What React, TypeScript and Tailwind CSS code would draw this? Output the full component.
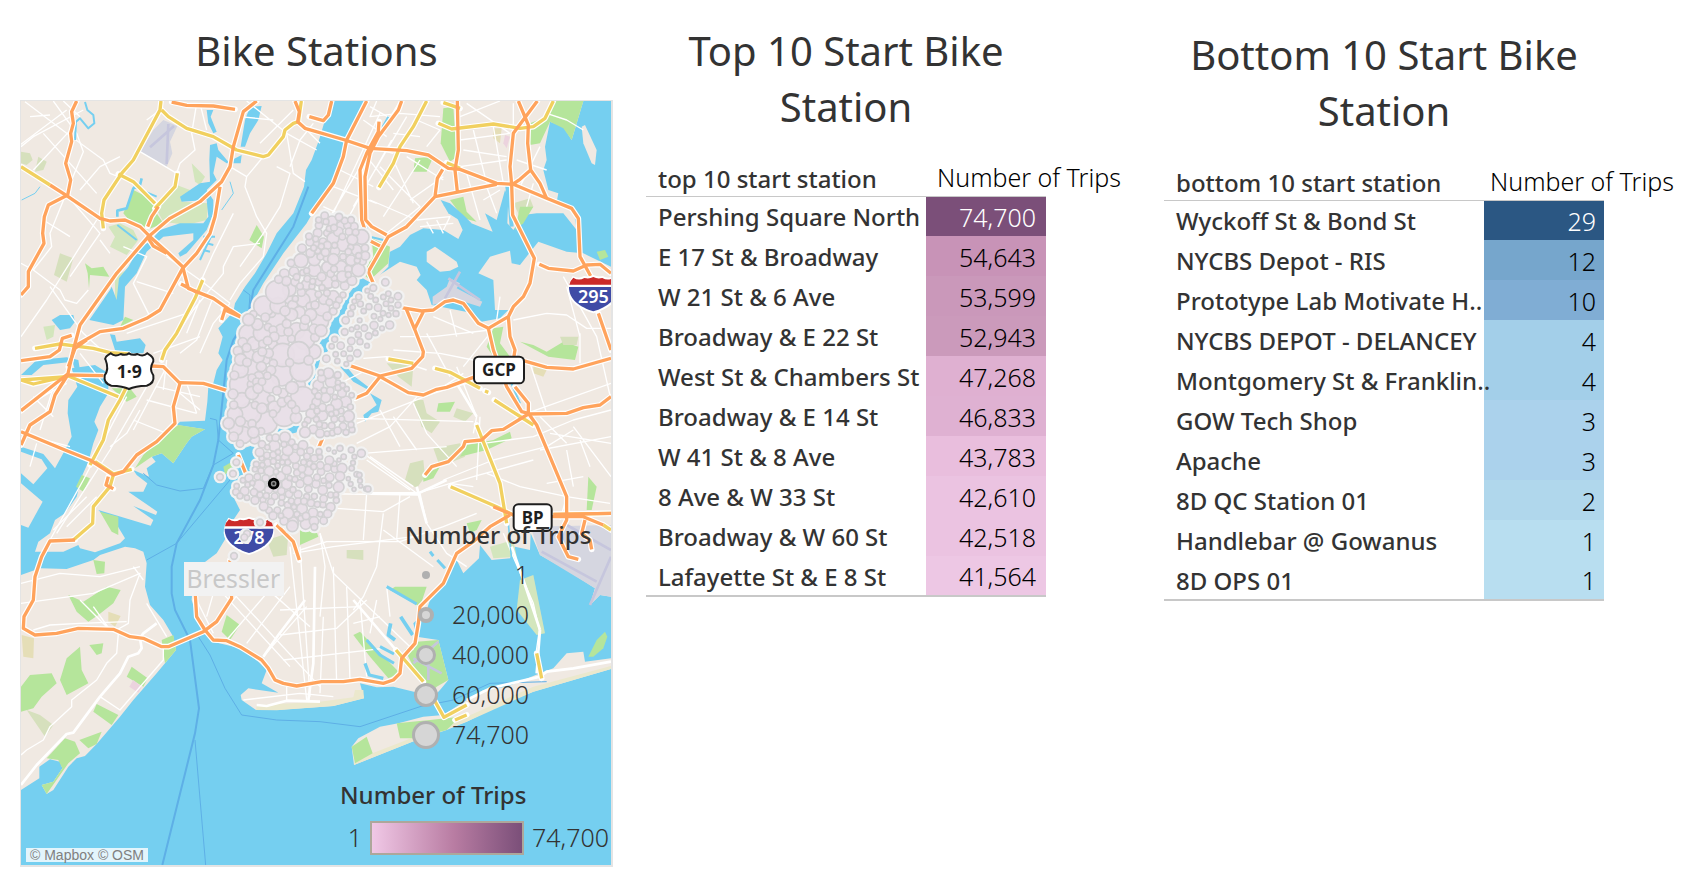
import React from "react";

type Row = { name: string; value: string; cell: string };

const topRows: Row[] = [
  { name: "Pershing Square North", value: "74,700", cell: "bg-[#7b4f79] text-white" },
  { name: "E 17 St & Broadway", value: "54,643", cell: "bg-[#c893b7] text-black" },
  { name: "W 21 St & 6 Ave", value: "53,599", cell: "bg-[#ca98ba] text-black" },
  { name: "Broadway & E 22 St", value: "52,943", cell: "bg-[#cb9abb] text-black" },
  { name: "West St & Chambers St", value: "47,268", cell: "bg-[#dfb0d1] text-black" },
  { name: "Broadway & E 14 St", value: "46,833", cell: "bg-[#dfb1d2] text-black" },
  { name: "W 41 St & 8 Ave", value: "43,783", cell: "bg-[#e9bedd] text-black" },
  { name: "8 Ave & W 33 St", value: "42,610", cell: "bg-[#ebc3e1] text-black" },
  { name: "Broadway & W 60 St", value: "42,518", cell: "bg-[#ebc3e1] text-black" },
  { name: "Lafayette St & E 8 St", value: "41,564", cell: "bg-[#edc7e4] text-black" },
];

const bottomRows: Row[] = [
  { name: "Wyckoff St & Bond St", value: "29", cell: "bg-[#2b5783] text-white" },
  { name: "NYCBS Depot - RIS", value: "12", cell: "bg-[#76a6cc] text-black" },
  { name: "Prototype Lab Motivate H..", value: "10", cell: "bg-[#80add4] text-black" },
  { name: "NYCBS DEPOT - DELANCEY", value: "4", cell: "bg-[#a3cfe9] text-black" },
  { name: "Montgomery St & Franklin..", value: "4", cell: "bg-[#a3cfe9] text-black" },
  { name: "GOW Tech Shop", value: "3", cell: "bg-[#abd2ec] text-black" },
  { name: "Apache", value: "3", cell: "bg-[#abd2ec] text-black" },
  { name: "8D QC Station 01", value: "2", cell: "bg-[#b0d7ec] text-black" },
  { name: "Handlebar @ Gowanus", value: "1", cell: "bg-[#b8def0] text-black" },
  { name: "8D OPS 01", value: "1", cell: "bg-[#b8def0] text-black" },
];

const sizeLegend = [
  { label: "1", dot: "size-2 bg-[#b0b0b0]" },
  { label: "20,000", dot: "size-4 border-4 border-[#b0b0b0] bg-[#d6d6d6]" },
  { label: "40,000", dot: "size-5 border-[3px] border-[#b0b0b0] bg-[#d6d6d6]" },
  { label: "60,000", dot: "size-6 border-[3px] border-[#b0b0b0] bg-[#d6d6d6]" },
  { label: "74,700", dot: "size-7 border-[3px] border-[#b0b0b0] bg-[#d6d6d6]" },
];

const land = [
  // New Jersey
  "63,303 1000,303 975,360 957,420 935,480 918,510 912,560 880,640 830,700 800,760 765,820 735,860 705,910 700,935 655,985 668,1010 655,1060 668,1080 650,1110 640,1150 625,1160 622,1205 615,1262 540,1265 530,1275 615,1288 575,1310 560,1330 520,1390 485,1360 455,1370 467,1385 440,1405 447,1430 400,1410 410,1425 442,1450 430,1475 385,1475 472,1535 468,1545 400,1518 460,1560 452,1577 295,1530 310,1545 345,1565 375,1615 360,1630 285,1657 240,1645 235,1635 190,1655 105,1655 115,1625 150,1600 165,1560 195,1540 230,1490 245,1430 265,1385 280,1330 295,1290 283,1265 300,1220 325,1180 325,1120 285,1095 215,1105 232,1160 205,1200 203,1240 215,1310 195,1350 165,1405 130,1362 63,1340",
  "63,1355 125,1378 142,1405 100,1453 63,1420",
  "63,1450 128,1505 85,1583 63,1575",
  // Staten Island
  "63,1725 120,1705 200,1707 280,1680 300,1665 375,1640 405,1645 430,1655 440,1690 435,1760 450,1815 490,1860 520,1910 528,1950 470,2020 400,2100 360,2150 290,2232 255,2268 230,2275 205,2300 160,2370 140,2382 125,2355 160,2345 187,2305 180,2285 150,2278 118,2300 118,2335 63,2370",
  // Manhattan and the Bronx
  "1095,303 1050,390 1030,450 1010,520 960,600 920,670 850,760 790,850 740,940 710,1040 705,1120 680,1210 680,1280 715,1350 760,1335 800,1290 870,1270 905,1220 915,1150 930,1080 960,1010 1010,930 1070,850 1110,790 1170,755 1200,740 1230,705 1270,685 1330,690 1375,717 1388,690 1370,650 1330,615 1340,610 1390,660 1440,680 1478,695 1455,640 1490,660 1515,570 1525,590 1522,670 1540,690 1570,645 1610,640 1690,640 1730,690 1720,625 1670,605 1675,580 1645,570 1630,510 1640,480 1635,440 1650,365 1690,380 1715,420 1750,303",
  "1100,750 1170,745 1165,800 1115,850 1080,830",
  "1280,755 1305,740 1370,785 1375,800 1350,812 1320,815 1280,785",
  "1745,380 1755,375 1790,450 1785,495 1775,490 1750,430",
  // Queens and Brooklyn
  "1200,785 1250,800 1262,825 1250,840 1280,870 1295,915 1420,940 1445,965 1500,955 1525,930 1485,930 1480,840 1435,820 1470,770 1530,752 1535,790 1560,795 1615,725 1700,755 1750,760 1833,800 1833,1790 1800,1785 1770,1815 1785,1765 1700,1710 1620,1665 1592,1600 1590,1650 1545,1640 1530,1675 1475,1680 1440,1635 1437,1675 1390,1720 1370,1680 1340,1740 1290,1800 1280,1830 1240,1870 1250,1910 1315,1920 1345,2040 1320,2070 1290,2100 1260,2080 1180,2060 1130,2062 1080,2050 1092,2095 1000,2118 830,2130 768,2130 725,2100 722,2085 745,2065 835,2078 785,2050 800,2010 775,1985 720,1945 640,1925 600,1880 575,1800 580,1740 610,1690 650,1660 680,1610 700,1560 720,1530 700,1490 760,1400 790,1310 880,1300 920,1290 910,1230 940,1160 960,1080 1030,1000 1070,900 1130,830",
  // Rockaway
  "1055,2240 1075,2215 1140,2180 1195,2170 1270,2150 1330,2145 1400,2100 1450,2070 1520,2060 1620,2020 1660,2005 1700,1960 1750,1955 1755,1985 1833,1975 1833,2007 1600,2075 1500,2115 1400,2165 1340,2190 1250,2220 1062,2295",
];

const water = [
  "620,330 640,330 632,350 650,395 640,400 625,370",
  "750,320 785,318 775,360 750,400 735,440 722,440 735,360",
  "630,435 650,430 655,450 685,485 725,465 722,490 680,490 650,470 640,520 650,540 620,570 640,600 640,640 620,690 560,760 540,770 535,760 580,720 580,700 490,710 440,755 410,820 375,860 370,960 340,975 268,960 330,870 335,860 350,900 357,835 385,800 420,740 450,725 480,690 540,670 610,670 625,650 620,600 545,605 540,590 600,550 630,545 628,480",
  "155,960 180,945 220,945 225,965 210,985 180,990",
  "330,1003 345,1005 350,1025 420,1015 437,1035 430,1060 360,1060 345,1050",
  "63,1125 110,1080 200,1072 235,1080 240,1110 225,1110 218,1085 130,1095 95,1125",
  "1322,600 1350,610 1390,645 1415,670 1385,665 1345,640",
  "1020,1100 1040,1100 1065,1130 1110,1165 1105,1170 1060,1145",
  "1110,1180 1145,1200 1135,1235 1115,1240 1095,1265 1090,1245 1130,1215",
];

const waterLines = [
  ["M255,306 262,330 280,345 283,370 265,385 240,355 228,365 225,420", 6],
  ["M425,535 420,555 400,565 380,625 352,632 352,650", 8],
  ["M352,675 410,720 M400,560 470,590", 6],
  ["M120,560 105,580 65,600 M690,545 700,580 665,630", 3],
  ["M635,705 600,780 M610,710 645,710 M620,730 640,735 M610,750 630,755", 6],
  ["M1165,350 1120,430 1083,510 1085,650 1110,710 1150,720", 6],
  ["M1520,545 1530,620 1535,680", 12],
  ["M1530,1140 1560,1210", 6],
  ["M1160,1760 1250,1812 M1290,1655 1300,1668 M1312,1680 1335,1705", 9],
  ["M1100,1920 1140,1965 1182,1990 M1140,1940 1182,1962", 9],
  ["M1095,1990 1108,2025 1150,2035", 10],
  ["M1172,1870 1165,1905 1185,1920 M1202,1850 1238,1905", 11],
  ["M1525,1570 1535,1680", 5],
] as const;

const parks = [
  ["#d3e6bd", "325,680 360,670 400,690 415,720 380,765 330,740 345,710"],
  ["#b5e59b", "370,640 400,570 460,600 470,640 490,670 440,690 395,670"],
  ["#d3e6bd", "465,620 530,555 570,570 545,605 625,610 620,660 560,675 490,665"],
  ["#d3e6bd", "575,490 605,520 615,530 600,555 585,545"],
  ["#d6e0bd", "63,455 90,460 98,480 80,495 63,490"],
  ["#d6e0bd", "115,470 140,485 130,510 105,515"],
  ["#d6e0bd", "180,760 220,775 200,845 162,825"],
  ["#b5e59b", "255,790 275,805 310,800 328,830 270,825 267,865 263,820"],
  ["#d3e6bd", "345,830 375,812 355,950 330,950 328,920 345,890"],
  ["#b5e59b", "375,950 400,960 360,980"],
  ["#b5e59b", "770,675 792,710 785,745 748,720"],
  ["#d3e6bd", "130,980 165,975 160,1010 140,1020"],
  ["#b5e59b", "430,1365 485,1310 535,1275 615,1288 575,1310 560,1330 520,1390 485,1360 455,1370 405,1405"],
  ["#b5e59b", "335,1165 390,1165 410,1190 380,1205"],
  ["#b5e59b", "245,1425 270,1435 250,1475 228,1460"],
  ["#b5e59b", "300,1535 355,1550 355,1605 335,1595"],
  ["#b5e59b", "280,1680 315,1685 313,1720 290,1722"],
  ["#b5e59b", "205,1785 250,1805 320,1760 362,1770 340,1810 295,1845 265,1865 230,1835"],
  ["#e5deb7", "325,1835 362,1848 345,1880 325,1865"],
  ["#e5deb7", "65,1905 102,1915 100,1975 70,1970"],
  ["#b5e59b", "63,2060 90,2025 155,2020 170,2050 125,2090 100,2125 63,2135"],
  ["#b5e59b", "180,2040 200,1975 240,1940 245,2010 265,2050 200,2085"],
  ["#b5e59b", "268,1935 310,1930 305,1960 290,1965"],
  ["#d6e0bd", "80,2130 120,2145 160,2175 135,2210"],
  ["#b5e59b", "395,2000 443,2035 430,2060 380,2030"],
  ["#ecd3de", "400,2040 425,2060 415,2078 388,2060"],
  ["#b5e59b", "290,2112 355,2145 335,2175 280,2135"],
  ["#b5e59b", "140,2275 195,2215 225,2225 240,2260 205,2290 140,2382 125,2355 160,2345 187,2305 175,2280"],
  ["#b5e59b", "238,2220 305,2195 290,2232 265,2245"],
  ["#b5e59b", "485,1920 520,1905 528,1950 495,1990"],
  ["#b5e59b", "1330,325 1360,320 1370,470 1350,485 1322,430"],
  ["#b5e59b", "1245,475 1300,470 1280,515 1240,515"],
  ["#b5e59b", "1350,600 1390,590 1400,635 1430,665 1390,655"],
  ["#b5e59b", "1590,370 1640,350 1660,303 1750,303 1715,420 1690,385 1650,365 1620,430 1590,435"],
  ["#d6e0bd", "1540,610 1590,595 1600,620 1565,660"],
  ["#b5e59b", "1560,620 1600,620 1570,670 1545,690"],
  ["#e5deb7", "1480,385 1505,385 1500,430 1480,415"],
  ["#ecd3de", "1515,405 1530,410 1520,445 1510,430"],
  ["#b5e59b", "1115,715 1170,740 1165,790 1110,840 1080,815 1120,770"],
  ["#b5e59b", "1790,755 1815,750 1825,770 1800,780"],
  ["#b5e59b", "1480,985 1510,980 1500,1030 1545,1090 1500,1100 1460,1040"],
  ["#b5e59b", "1560,1025 1600,1035 1640,1055 1690,1025 1735,1040 1725,1080 1645,1070"],
  ["#d6e0bd", "1680,1010 1735,1010 1730,1035 1690,1035"],
  ["#d6e0bd", "1160,1090 1240,1095 1235,1160 1195,1130"],
  ["#d6e0bd", "1240,1200 1270,1200 1280,1240 1320,1265 1295,1300 1265,1280"],
  ["#b5e59b", "1315,1210 1365,1205 1350,1235 1310,1235"],
  ["#d6e0bd", "1370,1225 1420,1240 1395,1265 1360,1250"],
  ["#d6e0bd", "1300,1345 1380,1330 1395,1370 1320,1400"],
  ["#b5e59b", "1380,1370 1400,1335 1480,1320 1530,1295 1535,1315 1460,1350"],
  ["#d6e0bd", "1230,1390 1270,1380 1275,1430 1250,1465 1215,1440"],
  ["#b5e59b", "1270,1425 1320,1400 1300,1435 1270,1445"],
  ["#b5e59b", "1765,1430 1790,1460 1775,1530 1760,1530"],
  ["#b5e59b", "900,1530 925,1520 955,1610 900,1635"],
  ["#d6e0bd", "800,1620 865,1600 860,1665 820,1670"],
  ["#d6e0bd", "1040,1650 1090,1650 1090,1680 1040,1675"],
  ["#b5e59b", "1400,1570 1445,1560 1430,1590 1410,1600"],
  ["#d3e6bd", "1470,1640 1540,1620 1550,1670 1480,1675"],
  ["#b5e59b", "680,1845 720,1875 690,1920 665,1895"],
  ["#b5e59b", "1185,1760 1280,1760 1260,1820 1170,1770"],
  ["#b5e59b", "1060,1905 1080,1895 1200,2020 1165,2035 1110,1970"],
  ["#b5e59b", "1215,1950 1250,1925 1315,1920 1345,2040 1310,2060 1290,2080 1240,2000"],
  ["#b5e59b", "1190,2170 1290,2160 1380,2150 1340,2190 1250,2215 1200,2215"],
  ["#b5e59b", "1055,2240 1100,2210 1118,2260 1065,2290"],
  ["#b5e59b", "1765,1970 1790,1920 1815,1895 1822,1910 1810,1945 1780,1970"],
  ["#d3e6bd", "1560,1740 1600,1725 1635,1900 1610,1905 1550,1830"],
  ["#b5e59b", "670,1400 705,1380 695,1405 675,1425"],
  ["#e5deb7", "1600,1095 1640,1110 1630,1130 1600,1120"],
] as const;

const runways = [
  "490,360 532,378 510,425 517,460 500,500 420,455 460,390",
  "1298,890 1340,860 1350,835 1380,850 1370,865 1447,905 1440,920 1375,900 1330,905 1298,915",
  "1592,1580 1833,1575 1833,1790 1800,1785 1770,1815 1785,1765 1620,1665",
];

const minor = [
  "M75,305 200,400 310,480 330,520 380,540",
  "M240,350 190,303 M90,350 150,345 M60,435 200,330 M100,510 230,370 M63,440 100,410 250,330 M130,400 290,580",
  "M160,303 230,400 250,455 215,540 150,700 155,740 100,810 M100,810 180,870 195,900 230,910 265,870 M100,810 63,790",
  "M290,660 140,900 63,1010 M240,570 300,500 360,470 M200,585 300,700 210,830 M130,660 210,710",
  "M440,360 480,330 M590,310 575,400 585,450 540,490 530,520 M600,310 620,390",
  "M420,455 480,490 530,520 M370,740 440,770 400,850 450,950 M410,845 520,880 M500,770 600,840 690,910",
  "M690,500 740,530 735,560 770,650 800,700 790,770 720,850 690,900 M790,470 740,530 M830,500 870,520 840,620 790,700 720,800 M860,400 880,520 915,545 M700,640 640,760 600,850",
  "M780,730 700,740 670,800 670,820 580,930 500,1050 M690,910 640,970 600,1060 M600,900 560,1000 M640,890 590,1020 540,1060",
  "M740,303 860,400 950,450 M780,430 880,330 M720,350 820,360 M915,385 960,430 M940,370 900,420 870,500",
  "M300,720 330,760 M310,800 M150,860 250,1000 310,1055 M380,1000 560,940 M460,1060 600,1010",
  "M240,1060 310,1150 M380,1190 250,1440 150,1620 M440,1160 330,1350 170,1600 M500,1100 400,1290 M440,1200 590,1240 M470,1160 600,1190 M560,1150 590,1240 M420,1230 380,1300 330,1340 M400,1260 500,1300",
  "M63,1225 200,1150 M100,1190 160,1250 M170,1130 120,1290 M63,1300 210,1340 M110,1330 90,1400 M430,1110 350,1160 M500,1080 490,1170 M540,1180 600,1230",
  "M160,1590 260,1490 M200,1580 290,1490",
  "M63,1750 180,1720 300,1730 420,1700 M63,1810 280,1780 420,1720 390,1800 385,1870 350,1890 M430,1740 400,1700 M240,1800 320,1880 M440,1810 500,1910 M330,1890 280,1820",
  "M100,1890 150,1875 240,1870 380,1865 M355,1900 350,1960 320,1990 290,2040 215,2100 215,2120 150,2180 130,2220 80,2250 63,2265",
  "M490,1940 490,1980 360,2130 300,2090",
  "M1200,303 960,700 M1140,340 1000,640 M1220,350 1060,620 M1175,420 1030,680 M1000,560 1130,610 M1020,510 1120,560 M1060,430 1180,460 M970,620 1080,670 M1110,320 1180,360 M1090,360 1160,410",
  "M1130,303 1110,350 1200,340 1320,350 M1180,400 1260,410 M1250,360 1320,390 1280,440 M1100,470 1180,570 M1140,500 1260,620 1160,700 M1180,480 1240,610 M1220,470 1330,540 M1260,480 1150,650 M1330,530 1230,600 M1110,600 1250,660",
  "M1250,660 1350,650 1330,690 M1280,665 1300,700 M1310,660 1330,700 M1260,680 1360,670",
  "M1400,310 1530,400 M1380,350 1500,303 M1540,310 1540,400 M1380,420 1530,400 M1390,450 1520,470 M1380,500 1520,480 M1420,390 1460,550 M1480,380 1510,550 M1400,520 1440,660 M1460,560 1490,640 M1500,570 1450,600",
  "M1550,480 1640,510 M1560,560 1620,440 M1600,550 1580,620 M1640,340 1700,360 1750,390",
  "M1200,1010 1300,1010 1470,990 M1300,950 1420,1000 M1350,930 1370,1010 M1180,1050 1320,1060 1420,1080 M1470,1000 1390,1100 M1280,1000 1350,1130",
  "M1640,940 1700,945 1760,985 1833,985 M1540,960 1640,940 M1700,860 1740,1010 M1690,830 1790,1010 1833,1200 M1500,890 1490,960 M1740,1000 1740,1090",
  "M1090,1075 1160,1070 1280,1110 M1020,1150 1100,1110 M1070,1270 1300,1180 1400,1150 M1070,1255 1420,1265 M1140,1230 1200,1340 M1090,1360 1340,1340 M1090,1360 1250,1480 M1300,1180 1390,1120 M1070,1330 1170,1280 1260,1180",
  "M1240,1210 1280,1300 1370,1400 M1180,1250 1250,1350 M1370,1100 1430,1250 1420,1300 M1440,1250 1430,1440 M1260,1480 1280,1570 1340,1660 1400,1700 M1250,1480 1420,1430 1600,1380 M1100,1380 1230,1470 M1110,1370 1240,1460",
  "M1450,1330 1600,1310 1720,1260 1833,1230 M1460,1420 1560,1460 1700,1490 1830,1510 M1620,1250 1700,1330 M1580,1240 1833,1150 M1590,1090 1640,1240 M1720,1280 1833,1430 M1650,1300 1833,1330 M1620,1350 1833,1310 M1740,1320 1770,1400 M1700,1350 1720,1460",
  "M1330,1440 1480,1380 1640,1340 1720,1290 M1350,1450 1420,1460 M1640,1450 1750,1430 M1700,1490 1680,1560",
  "M900,1480 1260,1485 M1010,1525 1150,1535 1230,1490 M1150,1540 1140,1620 1130,1700 1090,1790 1060,1830 M960,1600 1000,1720 1240,1950 M900,1650 980,1625 1200,1625 1330,1580 1430,1540",
  "M880,1660 1000,1640 1240,1610 M870,1640 920,2100 M900,1640 930,2090 M960,1600 975,1700 960,1850 M1100,1480 1090,1620 M1200,1480 1190,1620 M1150,1590 1300,1700",
  "M700,1780 960,2060 M650,1760 870,2000 M760,1730 930,1880 M740,1750 620,1900 M800,1780 680,1920 M870,1760 740,1930 M920,1820 790,1970",
  "M840,1905 1010,1885 1100,1800 M850,1980 1150,1945 M840,1830 1080,1820 M1000,1700 1010,2050 M1040,1760 1050,2040 M1080,1800 1100,2030 M970,1850 960,2080 M1130,1800 1110,1900 M1160,1760 1170,1850 M1060,1870 1140,1850 M860,2050 860,2100 M730,2100 900,2080 1000,2090",
  "M590,1800 640,1900 M640,1780 620,1850 M620,1760 700,1790 720,1760",
  "M1510,1600 1535,1660 1600,1810 1618,1890 1608,1960",
];

const yellow = [
  "M483,303 480,330 400,480 365,520 312,600 305,640 310,685",
  "M485,330 505,350 560,385 640,410 710,450 790,470 805,465 850,410 855,390 880,370 895,365 904,303",
  "M63,500 150,555 M355,522 400,545 465,610 M465,625 525,560 532,520",
  "M608,840 585,895 530,1000 495,1050 485,1080",
  "M105,1045 180,1032 280,1045 330,1058 385,1062",
  "M63,1140 100,1152 205,1128 355,1190 M63,1140 200,1130",
  "M385,1150 360,1200 325,1260 310,1320 270,1395 M285,1385 340,1422 395,1408 M340,1425 330,1460 280,1520 278,1570 220,1620",
  "M1280,303 1240,380 1200,440 1180,490 1137,562 M1330,308 1380,325 M1315,370 1355,387 1480,372 1560,385 1600,380 1635,355 1660,303 M1340,488 1380,505",
  "M1165,1077 1240,1090 M1305,1105 1350,1117 1440,1165 M1455,1173 1465,1177 M1483,1200 1600,1275",
  "M1430,1275 1460,1350 1500,1450 1520,1570 M1352,1460 1490,1520 1540,1545 M1660,1543 1833,1540 M1810,1575 1833,1590",
  "M1188,1950 1270,2045 M1300,2095 1332,2152 1400,2115 M1365,2160 1400,2145 M1610,1960 1625,2035",
];

const orange = [
  "M230,303 215,335 220,370 212,400 215,425 197,490 212,540 203,585 145,615 133,650 128,700 132,730 85,815 85,860 63,885",
  "M150,555 200,587 300,655 330,663 375,660 420,680 450,710 500,755 548,800 565,865 640,895 690,930 730,955 M543,852 590,877",
  "M770,303 730,335 700,440 690,500 665,545 600,605 510,655 445,710 350,820 240,975 220,1050 203,1125 165,1185 150,1235 90,1275 63,1335 M203,1122 63,1232",
  "M660,560 645,650 630,700 590,760 548,805 480,930 440,955 370,985 300,995 230,1035 M215,1006 187,1015 178,1050 150,1070 63,1082 M260,1020 225,1045 205,1100",
  "M515,306 560,316 640,318 705,328 M443,680 455,650 475,620 M445,715 460,738 500,760 M665,960 675,928 710,945 M730,955 670,928",
  "M885,303 898,335 893,365 915,385 1035,420 1110,445 1220,452 1285,465 1345,505 1380,508 1490,550 1540,553 1640,595 1715,625 1735,655 1740,770 1772,828",
  "M928,350 970,362 985,345 995,303 M1100,303 1040,420 1030,470 1000,550 935,640",
  "M1205,303 1195,330 1135,410 1110,460 1095,530 1097,660 1115,680 1160,705 M1137,365 1135,395 1100,460 1080,510 1085,660 1105,720 1140,738",
  "M1490,553 1305,590 1220,680 1165,710 1105,815 1120,850 M1328,508 1312,535 1305,590 M1372,303 1375,450 1365,510 1372,575",
  "M1555,303 1585,375 1583,430 1592,510 1620,550 1640,595 M1612,303 1540,400 1530,500 1535,553 1538,645 1603,775 1590,850 1570,890 1540,920 1525,950 1465,985 1435,970 1390,910 1360,900 1335,905 1300,930 1265,933 1200,922",
  "M1592,510 1560,538 1535,555 M1618,793 1645,805 1720,813 1760,795 1800,793 1833,820",
  "M1218,925 1245,990 1270,1055 1268,1070 1235,1105 1140,1128 1030,1090 M1270,935 1245,985",
  "M1525,950 1530,1010 1545,1050 1540,1080 M1545,1160 1585,1210 1585,1240 M1465,985 1480,1050 1520,1160 1565,1235 1585,1240 1610,1275 1700,1490 1700,1560 1675,1610 1705,1670 1735,1678",
  "M1140,1130 1225,1178 1270,1185 1310,1168 1340,1162 1420,1132 1480,1100 M1570,1082 1640,1102 1720,1107 1833,1075 M1140,1130 1100,1180 1065,1195",
  "M1275,1425 1295,1400 1345,1385 1390,1340 1395,1325 1445,1320 1475,1292 1510,1288 1585,1242 1700,1240 1750,1223 1800,1215 1833,1190",
  "M1795,940 1833,1050 M1480,1520 1540,1545 1660,1550 1750,1550 1810,1575 M1660,1543 1833,1540 M1755,1560 1745,1600 1770,1620 1775,1648",
  "M1530,1545 1470,1580 1420,1625 1370,1660 1330,1750 1260,1820 1255,1870 1245,1930 1205,1975 1200,2020 1180,2040 1150,2050 1080,2038 1030,2045 965,2045 890,2058 850,2050 825,2040 805,2005 785,1980 720,1940 680,1922 640,1920 615,1890 590,1850 585,1770",
  "M690,1680 695,1795 650,1865 610,1895 505,1940 485,1940 430,1915 390,1910 340,1888 235,1885 170,1900 105,1905 70,1885 72,1850 100,1800 105,1730 125,1670 150,1623 225,1620",
  "M63,1295 195,1350 270,1380 340,1425 370,1415 410,1365 470,1325 525,1270 520,1220 540,1150 490,1100 455,1098 M540,1148 610,1150 692,1175 M205,1125 310,1127 M325,1430 318,1455 340,1466",
  "M715,1365 742,1432 M830,1575 880,1625 898,1680 M968,1315 952,1352",
];

const ferry = [
  ["M925,560 880,680 760,870 745,950 700,1020 680,1080 655,1320 640,1395 600,1500 530,1630 515,1700 515,1780 525,1830 570,1920 597,2125 585,2200 487,2595", 6],
  ["M595,1910 630,1965 675,2065 725,2145 830,2160 960,2165 1080,2180 1260,2120 1360,2100 1470,2050 1640,2045 M585,2220 617,2595 M640,1395 700,1360 655,1320 M440,1680 530,1630 690,1440 M640,1395 610,1465 540,1473 470,1455 430,1420 M655,1320 650,1260 630,1255 M730,870 750,885 745,950", 3],
] as const;

type Zone = { points: number[][]; min: number; max: number; gap: number; tries: number };

const zones: Zone[] = [
  { points: [[715, 1020], [735, 965], [795, 900], [850, 860], [980, 900], [985, 960], [950, 1030], [930, 1100], [915, 1180], [905, 1255], [870, 1265], [800, 1280], [765, 1325], [715, 1335], [685, 1290], [685, 1240], [695, 1170]], min: 11, max: 38, gap: 0.64, tries: 2200 },
  { points: [[970, 640], [1050, 655], [1095, 720], [1100, 765], [1070, 820], [1045, 870], [985, 960], [795, 900], [840, 830], [895, 760], [940, 680]], min: 9, max: 24, gap: 0.72, tries: 3000 },
  { points: [[1155, 840], [1205, 900], [1190, 970], [1110, 1030], [1075, 1070], [1030, 1100], [965, 1080], [1010, 1000], [1070, 890]], min: 7, max: 12, gap: 1.15, tries: 1500 },
  { points: [[960, 1110], [1010, 1120], [1055, 1180], [1060, 1260], [1055, 1300], [980, 1315], [915, 1300], [912, 1270], [940, 1180]], min: 8, max: 19, gap: 0.82, tries: 1800 },
  { points: [[795, 1315], [850, 1310], [960, 1355], [1030, 1400], [1020, 1470], [995, 1555], [940, 1580], [880, 1580], [805, 1540], [780, 1505], [700, 1485], [705, 1460], [755, 1420], [775, 1350]], min: 8, max: 18, gap: 0.84, tries: 5000 },
  { points: [[980, 1340], [1070, 1350], [1060, 1400], [1105, 1465], [1020, 1475]], min: 6, max: 10, gap: 1.2, tries: 500 },
];

function inside(x: number, y: number, poly: number[][]) {
  let hit = false;
  for (let i = 0, j = poly.length - 1; i < poly.length; j = i++) {
    const [xi, yi] = poly[i];
    const [xj, yj] = poly[j];
    if (yi > y !== yj > y && x < ((xj - xi) * (y - yi)) / (yj - yi) + xi) hit = !hit;
  }
  return hit;
}

function makeStations() {
  let seed = 20177;
  const rand = () => {
    seed = (seed * 1664525 + 1013904223) % 4294967296;
    return seed / 4294967296;
  };
  const out: { x: number; y: number; r: number }[] = [];
  for (const zone of zones) {
    const xs = zone.points.map((p) => p[0]);
    const ys = zone.points.map((p) => p[1]);
    const x0 = Math.min(...xs);
    const y0 = Math.min(...ys);
    const w = Math.max(...xs) - x0;
    const h = Math.max(...ys) - y0;
    for (let i = 0; i < zone.tries; i++) {
      const x = x0 + rand() * w;
      const y = y0 + rand() * h;
      const fade = 1 - i / zone.tries;
      const r = zone.min + (zone.max - zone.min) * fade * Math.pow(rand(), 1.1);
      if (!inside(x, y, zone.points)) continue;
      if (out.some((o) => Math.hypot(o.x - x, o.y - y) < zone.gap * (o.r + r))) continue;
      out.push({ x: Math.round(x), y: Math.round(y), r: Math.round(r) });
    }
  }
  out.push(
    { x: 660, y: 1431, r: 10 },
    { x: 699, y: 1421, r: 10 },
    { x: 709, y: 1387, r: 10 },
    { x: 1084, y: 1360, r: 12 },
    { x: 1104, y: 1467, r: 9 },
    { x: 943, y: 1581, r: 10 },
    { x: 877, y: 1578, r: 17 },
    { x: 780, y: 1567, r: 10 },
    { x: 702, y: 1668, r: 10 },
    { x: 1078, y: 1425, r: 8 },
  );
  return out;
}

const stations = makeStations();

function Interstate({ x, y, label }: { x: number; y: number; label: string }) {
  return (
    <g transform={`translate(${x} ${y})`}>
      <path d="M-62,-54 Q-44,-44 -28,-54 Q-14,-50 0,-57 Q14,-50 28,-54 Q44,-44 62,-54 Q76,-32 76,-8 C74,24 40,46 0,58 C-40,46 -74,24 -76,-8 Q-76,-32 -62,-54Z" fill="#fff" />
      <path d="M-60,-49 Q-44,-38 -27,-48 Q-12,-44 0,-51 Q12,-44 27,-48 Q44,-38 60,-49 Q70,-40 72,-28 H-72 Q-70,-40 -60,-49Z" fill="#cb2a2a" />
      <path d="M-73,-21 H73 C74,16 40,40 0,52 C-40,40 -74,16 -73,-21Z" fill="#3f4ba6" />
      <text x="0" y="26" textAnchor="middle" fontSize="54" fontWeight="600" fill="#fff">{label}</text>
    </g>
  );
}

function Plate({ x, y, w, label }: { x: number; y: number; w: number; label: string }) {
  return (
    <g transform={`translate(${x} ${y})`}>
      <rect x={-w / 2} y="-40" width={w} height="80" rx="14" fill="#fff" stroke="#1e1e1e" strokeWidth="6" />
      <text x="0" y="19" textAnchor="middle" fontSize="51" fontWeight="700" fill="#1e1e1e">{label}</text>
    </g>
  );
}

function StationMap() {
  return (
    <svg viewBox="63 303 1770 2292" className="block w-full bg-[#75cff0]" fontFamily="'Noto Sans', sans-serif" role="img" aria-label="Bike Stations">
      {land.map((p) => <polygon key={p} points={p} fill="#f0e9e2" />)}
      <path d="M768,2130 830,2131 1000,2118 1092,2095 1090,2070 1065,2070 1060,2092 960,2105 770,2115Z M1062,2295 1250,2220 1400,2165 1600,2075 1833,2007 1833,1998 1600,2060 1400,2150 1065,2280Z" fill="#ebe8cd" />
      {parks.map(([c, p]) => <polygon key={p} points={p} fill={c} />)}
      {runways.map((p) => <polygon key={p} points={p} fill="#d5d6e0" />)}
      <path d="M505,372 500,492 M450,442 522,378 M1380,815 1335,895 M1345,835 1440,900 M1625,1655 1790,1745 M1833,1670 1770,1815 M1700,1575 1833,1650 M1240,1975 1325,2020 M1285,1960 1285,2040 M1240,1990 1315,1925" fill="none" stroke="#c6c6dd" strokeWidth="8" />
      {water.map((p) => <polygon key={p} points={p} fill="#75cff0" />)}
      <g fill="none" stroke="#5eafe6">
        {ferry.map(([d, w]) => <path key={d} d={d} strokeWidth={w} />)}
      </g>
      <g fill="none" stroke="#fff" strokeWidth="4" strokeLinejoin="round">
        {minor.map((d) => <path key={d} d={d} />)}
      </g>
      <g fill="none" stroke="#75cff0" strokeLinejoin="round">
        {waterLines.map(([d, w]) => <path key={d} d={d} strokeWidth={w} />)}
      </g>
      <g fill="none" stroke="#fff" strokeWidth="8" strokeLinejoin="round">
        <path d="M63,2355 110,2295 200,2202 220,2198 300,2090 360,2020 385,1970 415,1960 425,1945 420,1915 430,1900 470,1870 M790,1970 835,1905 915,1800 M945,1700 940,1990 925,2100 M1400,2100 1470,2065 1620,2030 1640,2015 1720,2005 1833,1985 M1620,1890 1610,2020 M1535,1640 1570,1740 1620,1890 M1100,1480 1255,1480 1340,1440 M1060,1800 1188,1950 M1250,1460 1280,1570 M770,2115 800,2118 860,2102 960,2105 M1370,1150 1430,1250" />
      </g>
      <g fill="none" stroke="#fff" strokeWidth="17" strokeLinejoin="round" strokeLinecap="round">
        {yellow.map((d) => <path key={d} d={d} />)}
        {orange.map((d) => <path key={d} d={d} />)}
      </g>
      <g fill="none" stroke="#f1d05f" strokeWidth="10" strokeLinejoin="round">
        {yellow.map((d) => <path key={d} d={d} />)}
      </g>
      <g fill="none" stroke="#ffa35c" strokeWidth="10" strokeLinejoin="round">
        {orange.map((d) => <path key={d} d={d} />)}
      </g>

      <path d="M317,1080 Q311,1072 332,1060 Q345,1072 362,1062 Q376,1068 387,1060 Q398,1068 412,1062 Q429,1072 442,1060 Q463,1072 460,1084 Q446,1108 460,1126 Q464,1150 440,1157 Q405,1158 387,1167 Q369,1158 334,1157 Q310,1150 314,1126 Q328,1108 317,1080Z" fill="#fff" stroke="#1e1e1e" strokeWidth="6" />
      <text x="388" y="1134" textAnchor="middle" fontSize="53" fontWeight="700" fill="#1e1e1e">1·9</text>
      <Plate x={1497} y={1110} w={150} label="GCP" />
      <Plate x={1598} y={1553} w={114} label="BP" />
      <Interstate x={1780} y={882} label="295" />
      <Interstate x={747} y={1607} label="278" />

      <g fill="#f2f2f2">
        {stations.map((s, i) => <circle key={i} cx={s.x} cy={s.y} r={s.r + 9} />)}
        <ellipse cx="737" cy="1608" rx="20" ry="24" />
      </g>
      <g fill="#e8dee7" fillOpacity="0.95" stroke="#d2d1d3" strokeWidth="5">
        {stations.map((s, i) => <circle key={i} cx={s.x} cy={s.y} r={s.r} />)}
        <circle cx="741" cy="1601" r="10" />
        <circle cx="733" cy="1612" r="10" />
      </g>
      <circle cx="821" cy="1451" r="13" fill="#8a8a8a" stroke="#000" strokeWidth="9" />
      <circle cx="821" cy="1451" r="4" fill="#222" />

      <rect x="552" y="1686" width="300" height="102" fill="#f2f2f2" />
      <text x="700" y="1765" textAnchor="middle" fontSize="74" fill="#c8c8c8">Bressler</text>
    </svg>
  );
}

function StationTable({ heading, rows, headPad, cellPad }: { heading: string; rows: Row[]; headPad: string; cellPad: string }) {
  return (
    <table className="w-full table-fixed border-collapse border-b-2 border-[#c8c8c8] text-2xl">
      <colgroup>
        <col />
        <col className="w-[120px]" />
      </colgroup>
      <thead>
        <tr className="h-[61px] border-b border-[#c8c8c8] align-bottom">
          <th scope="col" className="pb-px pl-3 text-left font-medium whitespace-nowrap text-[#333]">{heading}</th>
          <th scope="col" className={`pb-px text-left text-[25px] font-light whitespace-nowrap text-black ${headPad}`}>Number of Trips</th>
        </tr>
      </thead>
      <tbody>
        {rows.map((row) => (
          <tr key={row.name} className="h-10">
            <th scope="row" className="pt-0.5 pb-0 pl-3 text-left font-medium whitespace-nowrap text-[#333]">{row.name}</th>
            <td className={`pt-px pb-0 text-right text-[25px] leading-8 font-light ${cellPad} ${row.cell}`}>{row.value}</td>
          </tr>
        ))}
      </tbody>
    </table>
  );
}

export default function App() {
  return (
    <main className="flex min-h-screen w-full items-start overflow-hidden bg-white pr-[104px] pl-5 font-['Noto_Sans',sans-serif] text-[#333]">
      <section className="min-w-0 flex-[593] pt-[23px]">
        <h2 className="text-center text-[40px] leading-[56px] font-normal">Bike Stations</h2>
        <div className="relative mt-[21px] border border-r-2 border-b-2 border-[#e4e4e4]">
          <StationMap />
          <div className="absolute right-6 bottom-[110px] w-[182px] text-2xl">
            <h3 className="leading-10 font-medium whitespace-nowrap">Number of Trips</h3>
            <ul>
              {sizeLegend.map((item) => (
                <li key={item.label} className="flex h-10 items-center">
                  <span className="flex w-[42px] justify-center">
                    <span className={`rounded-full ${item.dot}`} />
                  </span>
                  <span className="w-[82px] text-right text-[25px] font-light">{item.label}</span>
                </li>
              ))}
            </ul>
          </div>
          <div className="absolute right-0.5 bottom-1 w-[269px] text-2xl">
            <h3 className="leading-10 font-medium">Number of Trips</h3>
            <div className="flex h-[46px] items-center justify-end gap-2 text-[25px] font-light">
              <span>1</span>
              <span className="h-[34px] w-[154px] border-2 border-[#ada79b] bg-linear-to-r from-[#f0c8e6] via-[#b87ca2] via-55% to-[#7b4f79]" />
              <span>74,700</span>
            </div>
          </div>
          <p className="absolute bottom-[3px] left-[5px] bg-white/80 px-1 font-['Liberation_Sans',sans-serif] text-sm leading-[14px] text-[#808080]">© Mapbox © OSM</p>
        </div>
      </section>

      <section className="ml-[33px] min-w-0 flex-[400] pt-[23px]">
        <h2 className="text-center text-[40px] leading-[56px] font-normal">Top 10 Start Bike Station</h2>
        <StationTable heading="top 10 start station" rows={topRows} headPad="pl-[11px]" cellPad="pr-2.5" />
      </section>

      <section className="ml-[118px] min-w-0 flex-[440] pt-[27px]">
        <h2 className="text-center text-[40px] leading-[56px] font-normal">Bottom 10 Start Bike Station</h2>
        <StationTable heading="bottom 10 start station" rows={bottomRows} headPad="pl-1.5" cellPad="pr-2" />
      </section>
    </main>
  );
}
